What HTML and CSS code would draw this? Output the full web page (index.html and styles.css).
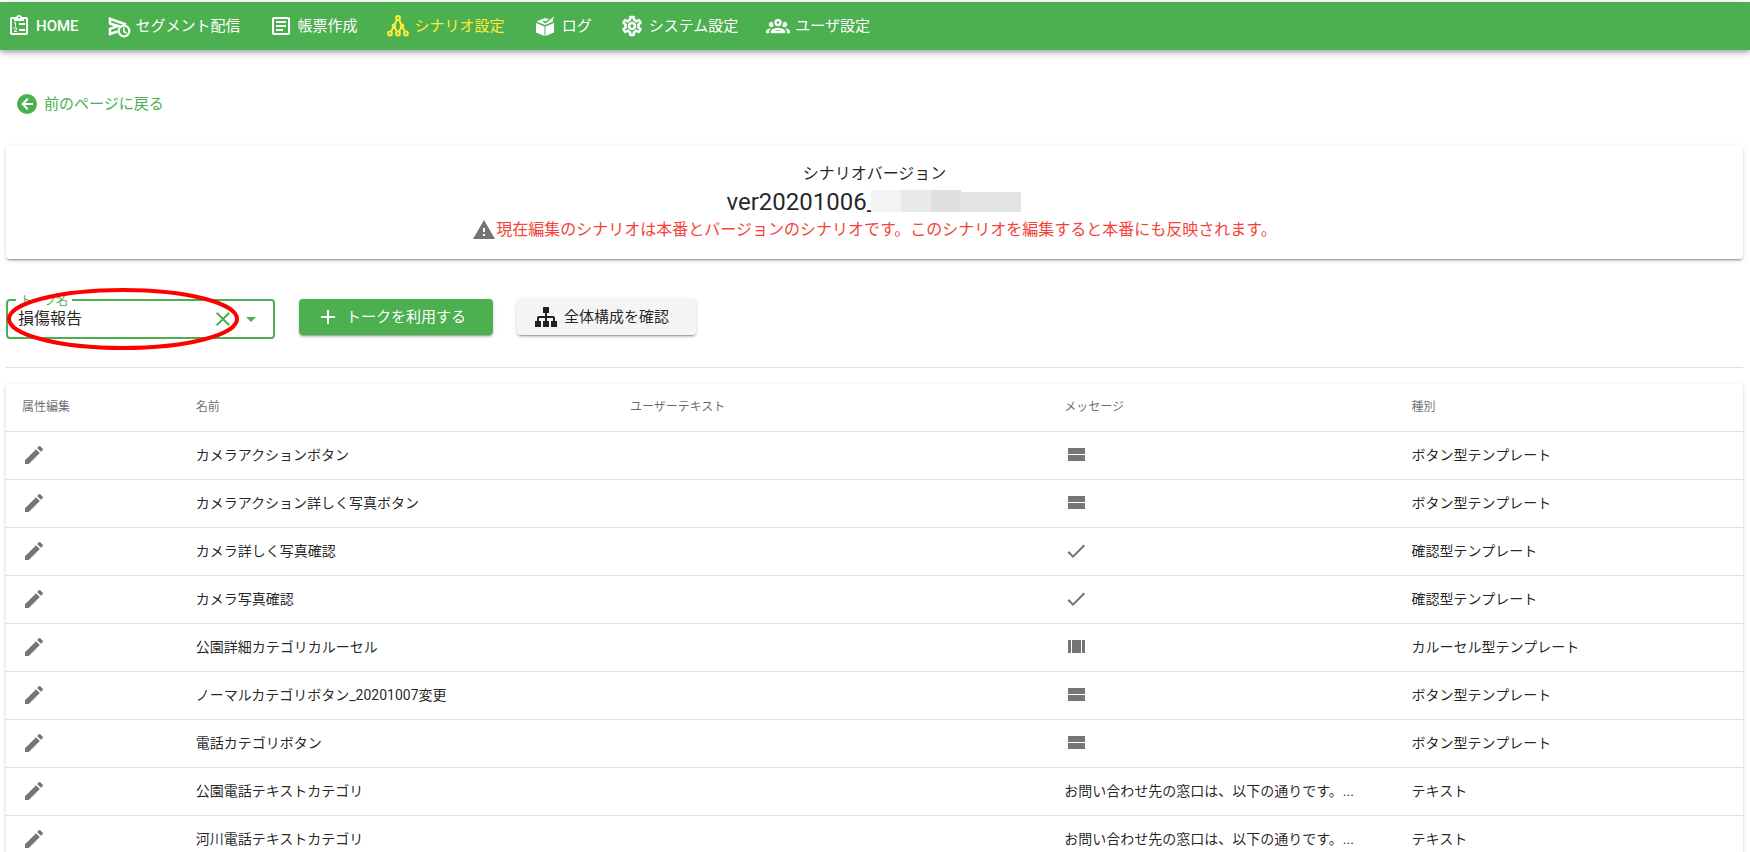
FILE: index.html
```html
<!DOCTYPE html>
<html lang="ja">
<head>
<meta charset="utf-8">
<title>シナリオ設定</title>
<link rel="stylesheet" href="styles.css">
</head>
<body>
<svg class="sprite" aria-hidden="true">
  <symbol id="i-pencil" viewBox="0 0 24 24"><path d="M20.71,7.04C21.1,6.65 21.1,6 20.71,5.63L18.37,3.29C18,2.9 17.35,2.9 16.96,3.29L15.12,5.12L18.87,8.87M3,17.25V21H6.75L17.81,9.93L14.06,6.18L3,17.25Z"/></symbol>
  <symbol id="i-stream" viewBox="0 0 24 24"><path d="M4,5V11H21V5M4,18H21V12H4V18Z"/></symbol>
  <symbol id="i-array" viewBox="0 0 24 24"><path d="M8,18H17V5H8M18,5V18H21V5M4,18H7V5H4V18Z"/></symbol>
  <symbol id="i-check" viewBox="0 0 24 24"><path d="M21,7L9,19L3.5,13.5L4.91,12.09L9,16.17L19.59,5.59L21,7Z"/></symbol>
</svg>

<nav class="nav">
  <a class="nav-item nav-item-latin" href="#"><svg class="icon" viewBox="0 0 24 24"><path fill-rule="evenodd" d="M19,3H14.82C14.4,1.84 13.3,1 12,1S9.6,1.84 9.18,3H5A2,2 0 0,0 3,5V19A2,2 0 0,0 5,21H19A2,2 0 0,0 21,19V5A2,2 0 0,0 19,3M12,2.6A1,1 0 1,1 12,4.6A1,1 0 1,1 12,2.6M5,5H7V7H17V5H19V19H5Z"/><path d="M12,9H18V11H12ZM12,15H18V17H12Z"/><path fill="none" stroke="currentColor" d="M7,8.500H8.500V12.500M6.500,14H9.500V15.500L7,17.500H10"/></svg>HOME</a>
  <a class="nav-item" href="#"><svg class="icon" viewBox="0 0 24 24"><path fill="none" stroke="currentColor" stroke-width="2.500" d="M10.500,17.500L3,20V14.800L11,12L3,9.500V4.700L19,10.500"/><circle cx="17" cy="17" r="5.300" fill="none" stroke="currentColor" stroke-width="2.200"/><path fill="none" stroke="currentColor" stroke-width="1.500" d="M16.800,13.500V17.500L19.500,19"/></svg>セグメント配信</a>
  <a class="nav-item" href="#"><svg class="icon" viewBox="0 0 24 24"><path d="M5,3C3.89,3 3,3.89 3,5V19C3,20.11 3.89,21 5,21H19C20.11,21 21,20.11 21,19V5C21,3.89 20.11,3 19,3H5M5,5H19V19H5V5M7,7V9H17V7H7M7,11V13H17V11H7M7,15V17H14V15H7Z"/></svg>帳票作成</a>
  <a class="nav-item nav-item-active" href="#" aria-current="page"><svg class="icon" viewBox="0 0 24 24"><g fill="none" stroke="currentColor" stroke-width="2"><circle cx="12" cy="4" r="1.900"/><circle cx="8" cy="11.800" r="1.400"/><circle cx="16" cy="11.800" r="1.400"/><circle cx="4" cy="19.500" r="1.900"/><circle cx="12" cy="19.500" r="1.900"/><circle cx="20" cy="19.500" r="1.900"/><path d="M11,5.800L8.700,10.500M13,5.800L15.300,10.500M7.300,13.200L5,17.700M8.700,13.200L11,17.700M15.300,13.200L13,17.700M16.700,13.200L19,17.700"/></g></svg>シナリオ設定</a>
  <a class="nav-item" href="#"><svg class="icon" viewBox="0 0 24 24"><path d="M3,9L11.500,12.500V22L3,18.500ZM12.500,12.500L21,9V18.500L12.500,22ZM3.500,7.500L12,4L16,5.200L12.500,7.500L10.500,6.500L9.500,7.500L12.500,9.500L18.500,4.500L21.500,2L19.500,6.500L20.500,7.500L12,11Z"/></svg>ログ</a>
  <a class="nav-item" href="#"><svg class="icon" viewBox="0 0 24 24"><path stroke="currentColor" stroke-width="0.500" d="M12,8A4,4 0 0,1 16,12A4,4 0 0,1 12,16A4,4 0 0,1 8,12A4,4 0 0,1 12,8M12,10A2,2 0 0,0 10,12A2,2 0 0,0 12,14A2,2 0 0,0 14,12A2,2 0 0,0 12,10M10,22C9.75,22 9.54,21.82 9.5,21.58L9.13,18.93C8.5,18.68 7.96,18.34 7.44,17.94L4.95,18.95C4.73,19.03 4.46,18.95 4.34,18.73L2.34,15.27C2.21,15.05 2.27,14.78 2.46,14.63L4.57,12.97L4.5,12L4.57,11L2.46,9.37C2.27,9.22 2.21,8.95 2.34,8.73L4.34,5.27C4.46,5.05 4.73,4.96 4.95,5.05L7.44,6.05C7.96,5.66 8.5,5.32 9.13,5.07L9.5,2.42C9.54,2.18 9.75,2 10,2H14C14.25,2 14.46,2.18 14.5,2.42L14.87,5.07C15.5,5.32 16.04,5.66 16.56,6.05L19.05,5.05C19.27,4.96 19.54,5.05 19.66,5.27L21.66,8.73C21.79,8.95 21.73,9.22 21.54,9.37L19.43,11L19.5,12L19.43,13L21.54,14.63C21.73,14.78 21.79,15.05 21.66,15.27L19.66,18.73C19.54,18.95 19.27,19.04 19.05,18.95L16.56,17.95C16.04,18.34 15.5,18.68 14.87,18.93L14.5,21.58C14.46,21.82 14.25,22 14,22H10M11.25,4L10.88,6.61C9.68,6.86 8.62,7.5 7.85,8.39L5.44,7.35L4.69,8.65L6.8,10.2C6.4,11.37 6.4,12.64 6.8,13.8L4.68,15.36L5.43,16.66L7.86,15.62C8.63,16.5 9.68,17.14 10.87,17.38L11.24,20H12.76L13.13,17.39C14.32,17.14 15.37,16.5 16.14,15.62L18.57,16.66L19.32,15.36L17.2,13.81C17.6,12.64 17.6,11.37 17.2,10.2L19.31,8.65L18.56,7.35L16.15,8.39C15.38,7.5 14.32,6.86 13.12,6.62L12.75,4H11.25Z"/></svg>システム設定</a>
  <a class="nav-item" href="#"><svg class="icon" viewBox="0 0 24 24"><path stroke="currentColor" stroke-width="0.400" d="M12,5A3.5,3.5 0 0,0 8.5,8.5A3.5,3.5 0 0,0 12,12A3.5,3.5 0 0,0 15.5,8.5A3.5,3.5 0 0,0 12,5M12,7A1.5,1.5 0 0,1 13.5,8.5A1.5,1.5 0 0,1 12,10A1.5,1.5 0 0,1 10.5,8.5A1.5,1.5 0 0,1 12,7M5.5,8A2.5,2.5 0 0,0 3,10.5C3,11.44 3.53,12.25 4.29,12.68C4.65,12.88 5.06,13 5.5,13C5.94,13 6.35,12.88 6.71,12.68C7.08,12.47 7.39,12.17 7.62,11.81C6.89,10.86 6.5,9.7 6.5,8.5C6.5,8.41 6.5,8.31 6.5,8.22C6.2,8.08 5.86,8 5.5,8M18.5,8C18.14,8 17.8,8.08 17.5,8.22C17.5,8.31 17.5,8.41 17.5,8.5C17.5,9.7 17.11,10.86 16.38,11.81C16.5,12 16.63,12.15 16.78,12.3C16.94,12.45 17.1,12.58 17.29,12.68C17.65,12.88 18.06,13 18.5,13C18.94,13 19.35,12.88 19.71,12.68C20.47,12.25 21,11.44 21,10.5A2.5,2.5 0 0,0 18.5,8M12,14C9.66,14 5,15.17 5,17.5V19H19V17.5C19,15.17 14.34,14 12,14M4.71,14.55C2.78,14.78 0,15.76 0,17.5V19H3V17.07C3,16.06 3.69,15.22 4.71,14.55M19.29,14.55C20.31,15.22 21,16.06 21,17.07V19H24V17.5C24,15.76 21.22,14.78 19.29,14.55M12,16C13.53,16 15.24,16.5 16.23,17H7.77C8.76,16.5 10.47,16 12,16Z"/></svg>ユーザ設定</a>
</nav>

<main class="page">
  <a class="back" href="#"><svg class="icon" viewBox="0 0 24 24"><path d="M2,12A10,10 0 0,1 12,2A10,10 0 0,1 22,12A10,10 0 0,1 12,22A10,10 0 0,1 2,12M18,11H10L13.5,7.5L12.08,6.08L6.16,12L12.08,17.92L13.5,16.5L10,13H18V11Z"/></svg>前のページに戻る</a>

  <section class="card version">
    <p class="version-label">シナリオバージョン</p>
    <p class="version-name">ver20201006_<span class="mask"><i></i><i></i><i></i><i></i><i></i></span></p>
    <p class="version-alert"><svg class="icon" viewBox="0 0 24 24"><path d="M13,14H11V10H13M13,18H11V16H13M1,21H23L12,2L1,21Z"/></svg>現在編集のシナリオは本番とバージョンのシナリオです。このシナリオを編集すると本番にも反映されます。</p>
  </section>

  <div class="toolbar">
    <div class="field">
      <label class="field-label" for="talk">トーク名</label>
      <input class="field-input" id="talk" type="text" value="損傷報告">
      <button class="field-button" type="button" aria-label="クリア"><svg class="icon" viewBox="0 0 24 24"><path d="M19,6.41L17.59,5L12,10.59L6.41,5L5,6.41L10.59,12L5,17.59L6.41,19L12,13.41L17.59,19L19,17.59L13.41,12L19,6.41Z"/></svg></button>
      <button class="field-button" type="button" aria-label="開く"><svg class="icon" viewBox="0 0 24 24"><path d="M7,10L12,15L17,10H7Z"/></svg></button>
      <svg class="marker" viewBox="0 0 232 64" aria-hidden="true"><ellipse cx="116" cy="32" rx="114" ry="29"/></svg>
    </div>
    <button class="button button-primary" type="button"><svg class="icon" viewBox="0 0 24 24"><path d="M19,13H13V19H11V13H5V11H11V5H13V11H19V13Z"/></svg>トークを利用する</button>
    <button class="button" type="button"><svg class="icon" viewBox="0 0 24 24"><path d="M9,2V8H11V11H5C3.89,11 3,11.89 3,13V16H1V22H7V16H5V13H11V16H9V22H15V16H13V13H19V16H17V22H23V16H21V13C21,11.89 20.11,11 19,11H13V8H15V2H9Z"/></svg>全体構成を確認</button>
  </div>

  <hr class="divider">

  <div class="card">
    <table class="table">
      <thead>
        <tr><th class="col-edit">属性編集</th><th class="col-name">名前</th><th class="col-text">ユーザーテキスト</th><th class="col-message">メッセージ</th><th class="col-type">種別</th></tr>
      </thead>
      <tbody>
        <tr><td><button class="edit" type="button" aria-label="編集"><svg class="icon"><use href="#i-pencil"/></svg></button></td><td>カメラアクションボタン</td><td></td><td><svg class="icon"><use href="#i-stream"/></svg></td><td>ボタン型テンプレート</td></tr>
        <tr><td><button class="edit" type="button" aria-label="編集"><svg class="icon"><use href="#i-pencil"/></svg></button></td><td>カメラアクション詳しく写真ボタン</td><td></td><td><svg class="icon"><use href="#i-stream"/></svg></td><td>ボタン型テンプレート</td></tr>
        <tr><td><button class="edit" type="button" aria-label="編集"><svg class="icon"><use href="#i-pencil"/></svg></button></td><td>カメラ詳しく写真確認</td><td></td><td><svg class="icon"><use href="#i-check"/></svg></td><td>確認型テンプレート</td></tr>
        <tr><td><button class="edit" type="button" aria-label="編集"><svg class="icon"><use href="#i-pencil"/></svg></button></td><td>カメラ写真確認</td><td></td><td><svg class="icon"><use href="#i-check"/></svg></td><td>確認型テンプレート</td></tr>
        <tr><td><button class="edit" type="button" aria-label="編集"><svg class="icon"><use href="#i-pencil"/></svg></button></td><td>公園詳細カテゴリカルーセル</td><td></td><td><svg class="icon"><use href="#i-array"/></svg></td><td>カルーセル型テンプレート</td></tr>
        <tr><td><button class="edit" type="button" aria-label="編集"><svg class="icon"><use href="#i-pencil"/></svg></button></td><td>ノーマルカテゴリボタン_20201007変更</td><td></td><td><svg class="icon"><use href="#i-stream"/></svg></td><td>ボタン型テンプレート</td></tr>
        <tr><td><button class="edit" type="button" aria-label="編集"><svg class="icon"><use href="#i-pencil"/></svg></button></td><td>電話カテゴリボタン</td><td></td><td><svg class="icon"><use href="#i-stream"/></svg></td><td>ボタン型テンプレート</td></tr>
        <tr><td><button class="edit" type="button" aria-label="編集"><svg class="icon"><use href="#i-pencil"/></svg></button></td><td>公園電話テキストカテゴリ</td><td></td><td>お問い合わせ先の窓口は、以下の通りです。...</td><td>テキスト</td></tr>
        <tr><td><button class="edit" type="button" aria-label="編集"><svg class="icon"><use href="#i-pencil"/></svg></button></td><td>河川電話テキストカテゴリ</td><td></td><td>お問い合わせ先の窓口は、以下の通りです。...</td><td>テキスト</td></tr>
      </tbody>
    </table>
  </div>
</main>
</body>
</html>
```
FILE: styles.css
```css
* {
  box-sizing: border-box;
}

html {
  scrollbar-width: none;
}

body {
  margin: 0;
  padding-top: 2px;
  background: #fff;
  color: rgba(0, 0, 0, 0.87);
  font-family: Roboto, "Noto Sans CJK JP", sans-serif;
  font-size: 16px;
  font-weight: 400;
  line-height: 24px;
}

p {
  margin: 0;
}

button,
input {
  font: inherit;
  color: inherit;
  border: 0;
  background: none;
  padding: 0;
}

.sprite {
  display: none;
}

.icon {
  display: block;
  flex: none;
  width: 24px;
  height: 24px;
  fill: currentColor;
}

.nav {
  display: flex;
  align-items: center;
  gap: 28px;
  height: 48px;
  padding: 0 7px;
  background: #4caf50;
  color: #fff;
  box-shadow: 0 2px 4px -1px rgba(0, 0, 0, 0.2), 0 4px 5px rgba(0, 0, 0, 0.14), 0 1px 10px rgba(0, 0, 0, 0.12);
}

.nav-item {
  display: flex;
  align-items: center;
  gap: 5px;
  color: inherit;
  font-size: 15px;
  text-decoration: none;
  white-space: nowrap;
}

.nav-item-latin {
  font-weight: 500;
}

.nav-item-active {
  color: #ffeb3b;
}

.page {
  padding: 42px 7px 0 6px;
}

.back {
  display: inline-flex;
  align-items: center;
  gap: 5px;
  margin: 0 0 30px 9px;
  color: #4caf50;
  font-size: 15px;
  text-decoration: none;
  vertical-align: top;
}

.card {
  border-radius: 4px;
  background: #fff;
  box-shadow: 0 3px 1px -2px rgba(0, 0, 0, 0.2), 0 2px 2px rgba(0, 0, 0, 0.14), 0 1px 5px rgba(0, 0, 0, 0.12);
}

.version {
  padding: 16px 16px 17px;
  text-align: center;
}

.version-name {
  display: flex;
  align-items: center;
  justify-content: center;
  font-size: 24px;
  line-height: 32px;
}

.mask {
  display: flex;
  width: 150px;
  height: 22px;
  margin: 0 2px 2px -7px;
}

.mask i {
  flex: 1;
  background: #e3e3e3;
}

.mask i:nth-child(1) {
  background: #f3f3f3;
}

.mask i:nth-child(2) {
  background: #e9e9e9;
}

.mask i:nth-child(3) {
  background: #dfdfdf;
}

.mask i:nth-child(n + 4) {
  margin-top: 2px;
}

.version-alert {
  display: flex;
  justify-content: center;
  color: #f44336;
}

.version-alert .icon {
  color: #757575;
}

.toolbar {
  display: flex;
  align-items: flex-start;
  gap: 24px;
  margin-top: 40px;
}

.field {
  position: relative;
  display: flex;
  align-items: center;
  width: 269px;
  height: 40px;
  padding: 0 6px 0 10px;
  border: 2px solid #4caf50;
  border-radius: 4px;
  color: #4caf50;
}

.field-label {
  position: absolute;
  top: -8px;
  left: 8px;
  padding: 0 4px;
  background: #fff;
  font-size: 12px;
  line-height: 16px;
}

.field-input {
  flex: 1;
  min-width: 0;
  color: rgba(0, 0, 0, 0.87);
  outline: 0;
}

.field-button {
  margin-right: 4px;
}

.marker {
  position: absolute;
  top: -14px;
  left: -1px;
  width: 232px;
  height: 64px;
  fill: none;
  stroke: #f00;
  stroke-width: 4px;
  pointer-events: none;
}

.button {
  display: flex;
  align-items: center;
  gap: 6px;
  height: 36px;
  padding: 0 27px 0 17px;
  border-radius: 4px;
  background: #f5f5f5;
  font-size: 15px;
  box-shadow: 0 3px 1px -2px rgba(0, 0, 0, 0.2), 0 2px 2px rgba(0, 0, 0, 0.14), 0 1px 5px rgba(0, 0, 0, 0.12);
}

.button-primary {
  background: #4caf50;
  color: #fff;
}

.divider {
  height: 1px;
  margin: 28px 0 16px;
  border: 0;
  background: rgba(0, 0, 0, 0.12);
}

.table {
  width: 100%;
  table-layout: fixed;
  border-spacing: 0;
  font-size: 14px;
}

.table th,
.table td {
  height: 48px;
  padding: 0 16px 2px;
  border-bottom: 1px solid rgba(0, 0, 0, 0.12);
  text-align: left;
  white-space: nowrap;
}

.table th {
  color: rgba(0, 0, 0, 0.6);
  font-size: 12px;
  font-weight: 400;
}

.table .icon {
  color: #757575;
}

.edit {
  display: block;
}

.col-edit {
  width: 10%;
}

.col-name,
.col-text {
  width: 25%;
}

.col-message,
.col-type {
  width: 20%;
}
```
